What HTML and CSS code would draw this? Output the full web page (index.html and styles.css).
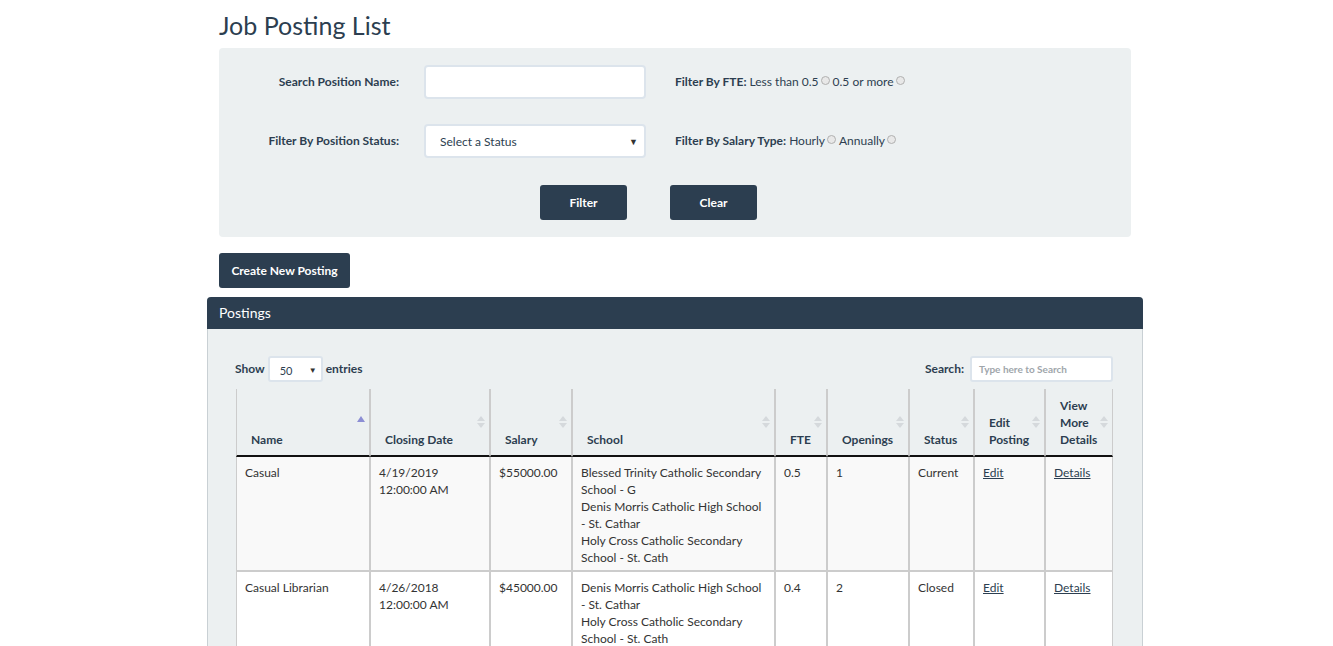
FILE: index.html
```html
<!DOCTYPE html>
<html>
<head>
<meta charset="utf-8">
<title>Job Posting List</title>
<link rel="stylesheet" href="styles.css">
</head>
<body>
<div class="page">
  <h1 class="title">Job Posting List</h1>

  <div class="filters">
    <div class="filter-grid">
      <label class="flabel">Search Position Name:</label>
      <input class="ctrl" type="text">
      <div class="opt"><b>Filter By FTE:</b> Less than 0.5<span class="radio"></span>0.5 or more<span class="radio"></span></div>

      <label class="flabel">Filter By Position Status:</label>
      <div class="ctrl select">Select a Status<span class="caret">▼</span></div>
      <div class="opt"><b>Filter By Salary Type:</b> Hourly<span class="radio"></span>Annually<span class="radio"></span></div>
    </div>
    <div class="filter-actions">
      <button class="btn btn-wide">Filter</button>
      <button class="btn btn-wide">Clear</button>
    </div>
  </div>

  <button class="btn create">Create New Posting</button>

  <div class="panel">
    <div class="panel-head">Postings</div>
    <div class="panel-body">
      <div class="dt-top">
        <div class="dt-length">Show <span class="mini-select">50<span class="caret">▼</span></span> entries</div>
        <div class="dt-search">Search: <span class="search-box">Type here to Search</span></div>
      </div>
      <table class="grid">
        <colgroup>
          <col style="width:134px"><col style="width:120px"><col style="width:82px"><col style="width:203px"><col style="width:52px"><col style="width:82px"><col style="width:65px"><col style="width:71px"><col style="width:68px">
        </colgroup>
        <thead>
          <tr>
            <th><span class="sort asc"></span>Name</th>
            <th><span class="sort both"></span>Closing Date</th>
            <th><span class="sort both"></span>Salary</th>
            <th><span class="sort both"></span>School</th>
            <th><span class="sort both"></span>FTE</th>
            <th><span class="sort both"></span>Openings</th>
            <th><span class="sort both"></span>Status</th>
            <th><span class="sort both"></span>Edit Posting</th>
            <th><span class="sort both"></span>View More Details</th>
          </tr>
        </thead>
        <tbody>
          <tr class="odd">
            <td>Casual</td>
            <td>4/19/2019<br>12:00:00 AM</td>
            <td>$55000.00</td>
            <td>Blessed Trinity Catholic Secondary School - G<br>Denis Morris Catholic High School - St. Cathar<br>Holy Cross Catholic Secondary School - St. Cath</td>
            <td>0.5</td>
            <td>1</td>
            <td>Current</td>
            <td><a href="#">Edit</a></td>
            <td><a href="#">Details</a></td>
          </tr>
          <tr class="even">
            <td>Casual Librarian</td>
            <td>4/26/2018<br>12:00:00 AM</td>
            <td>$45000.00</td>
            <td>Denis Morris Catholic High School - St. Cathar<br>Holy Cross Catholic Secondary School - St. Cath</td>
            <td>0.4</td>
            <td>2</td>
            <td>Closed</td>
            <td><a href="#">Edit</a></td>
            <td><a href="#">Details</a></td>
          </tr>
        </tbody>
      </table>
    </div>
  </div>
</div>
</body>
</html>
```

FILE: styles.css
```css
* { box-sizing: border-box; }
html, body { margin: 0; padding: 0; background: #fff; }
body {
  font-family: Lato, "Open Sans", Arial, sans-serif;
  font-size: 12px;
  line-height: 17px;
  color: #2c3e50;
}
.page {
  width: 936px;
  margin-left: 207px;
}
.title {
  margin: 10px 12px 8px;
  font-size: 25px;
  line-height: 30px;
  font-weight: 400;
  color: #2c3e50;
}
.filters {
  margin: 0 12px;
  background: #ecf0f1;
  border-radius: 4px;
  padding: 17px 0 17px;
}
.filter-grid {
  display: grid;
  grid-template-columns: 180px 222px 1fr;
  grid-auto-rows: 34px;
  column-gap: 0;
  row-gap: 25px;
  align-items: center;
}
.flabel {
  font-weight: 700;
  text-align: right;
  margin-top: -1px;
}
.ctrl {
  margin-left: 25px;
  height: 34px;
  width: 222px;
  border: 2px solid #dce4ec;
  border-radius: 4px;
  background: #fff;
  font: inherit;
}
.select {
  display: flex;
  align-items: center;
  justify-content: space-between;
  padding: 0 6px 0 14px;
  color: #2c3e50;
}
.select .caret { font-size: 9px; color: #333; }
.opt { margin-left: 54px; margin-top: -1px; }
.opt b { font-weight: 700; }
.radio {
  display: inline-block;
  width: 9px;
  height: 9px;
  margin: 0 3px 0 2px;
  border: 1px solid #b0b0b0;
  border-radius: 50%;
  background: #e8e8e8;
  vertical-align: 1px;
}
.filter-actions {
  display: flex;
  gap: 43px;
  padding-left: 321px;
  margin-top: 27px;
}
.btn {
  display: inline-block;
  background: #2c3e50;
  color: #fff;
  border: 0;
  border-radius: 3px;
  font: inherit;
  font-weight: 700;
  height: 35px;
  padding: 0 13px;
  cursor: pointer;
}
.btn-wide { width: 87px; }
.create {
  margin: 16px 12px 0;
  width: 131px;
  padding: 0;
}
.panel {
  margin-top: 9px;
  border: 1px solid #c9d0d4;
  border-top: 0;
  border-radius: 4px 4px 0 0;
  background: #ecf0f1;
}
.panel-head {
  height: 32px;
  background: #2c3e50;
  color: #fff;
  font-size: 14px;
  line-height: 32px;
  padding-left: 12px;
  border-radius: 4px 4px 0 0;
  margin: 0 -1px;
}
.panel-body {
  padding: 27px 29px 0 27px;
}
.dt-top {
  display: flex;
  justify-content: space-between;
  align-items: center;
  height: 26px;
  margin-bottom: 7px;
}
.dt-length, .dt-search {
  font-weight: 700;
  display: flex;
  align-items: center;
}
.dt-length { margin-top: -2px; }
.dt-search { margin-top: -1px; }
.mini-select {
  display: inline-flex;
  align-items: center;
  justify-content: space-between;
  width: 55px;
  height: 26px;
  margin: 2px 3px 0 3px;
  padding: 2px 4px 0 10px;
  border: 2px solid #dce4ec;
  border-radius: 3px;
  background: #fff;
  font-size: 11px;
  font-weight: 400;
  color: #2c3e50;
}
.mini-select .caret { font-size: 8px; color: #333; }
.search-box {
  display: inline-block;
  width: 143px;
  height: 26px;
  margin-left: 6px;
  padding: 3px 7px;
  border: 2px solid #dce4ec;
  border-radius: 3px;
  background: #fff;
  color: #a0a6ab;
  font-size: 10px;
  font-weight: 700;
}
.grid {
  width: 877px;
  margin-left: 1px;
  table-layout: fixed;
  border-collapse: separate;
  border-spacing: 0;
  color: #333;
}
.grid th {
  position: relative;
  vertical-align: bottom;
  text-align: left;
  font-weight: 700;
  color: #2c3e50;
  padding: 8px 18px 7px 14px;
  border-left: 1px solid #ccc;
  border-right: 1px solid #ccc;
  border-bottom: 2px solid #111;
  background: #ecf0f1;
}
.grid td {
  vertical-align: top;
  padding: 7px 8px 4px;
  border: 1px solid #ccc;
}
.grid tr.odd td { background: #f9f9f9; }
.grid tr.even td { background: #fff; }
.grid tbody tr:first-child td { border-top: 0; }
.grid a { color: #2c3e50; text-decoration: underline; }
.sort {
  position: absolute;
  right: 4px;
  top: 50%;
  width: 8px;
  height: 14px;
  margin-top: -7px;
}
.sort::before, .sort::after {
  content: "";
  position: absolute;
  left: 0;
  border-left: 4px solid transparent;
  border-right: 4px solid transparent;
}
.sort.both::before {
  top: 1px;
  border-bottom: 5px solid #d5d9dc;
}
.sort.both::after {
  top: 8px;
  border-top: 5px solid #d5d9dc;
}
.sort.asc::before {
  top: 1px;
  border-bottom: 6px solid #8c8ed4;
}
```
